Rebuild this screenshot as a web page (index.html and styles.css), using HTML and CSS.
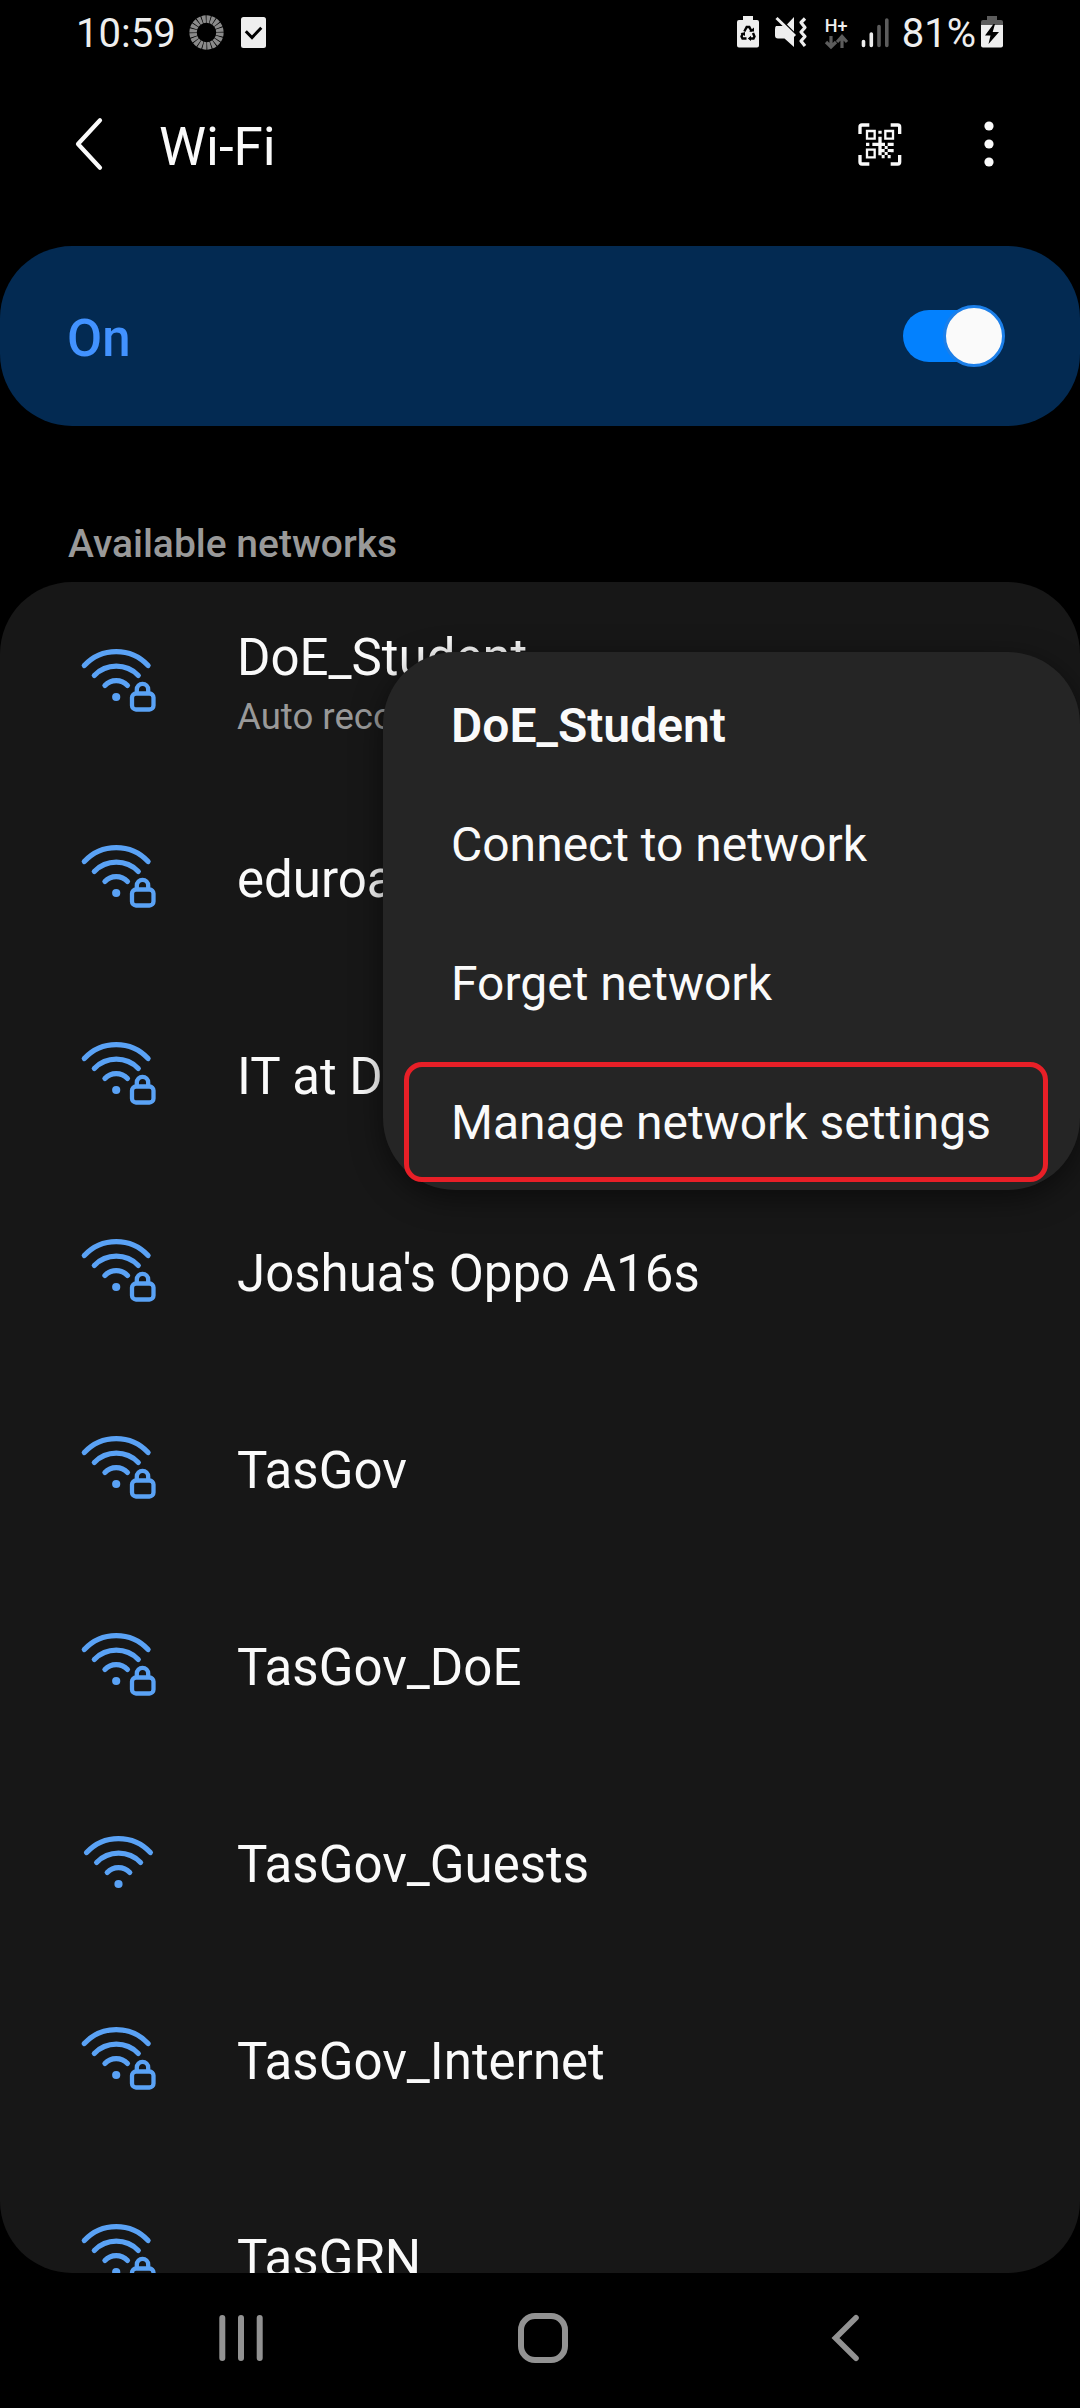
FILE: index.html
```html
<!DOCTYPE html>
<html lang="en">
<head>
<meta charset="utf-8">
<title>Wi-Fi</title>
<link rel="stylesheet" href="styles.css">
</head>
<body>
<svg class="defs" width="0" height="0" aria-hidden="true">
  <symbol id="waves" viewBox="20 36 80 68">
    <g fill="none" stroke="currentColor" stroke-width="5.200" stroke-linecap="round">
      <path d="M24.3 55.5a43.5 43.5 0 0 1 63.8 0"/>
      <path d="M34.3 65.5a30.7 30.7 0 0 1 44 0"/>
      <path d="M44.9 75.5a15.7 15.7 0 0 1 22.6 0"/>
    </g>
    <circle cx="56.2" cy="87" r="4.100" fill="currentColor"/>
  </symbol>
  <symbol id="wifi-lock" viewBox="20 36 80 68">
    <use href="#waves" x="20" y="36" width="80" height="68"/>
    <g fill="none" stroke="currentColor" stroke-width="4.300">
      <rect x="72" y="83.5" width="21.5" height="16" rx="4"/>
      <path d="M76.8 83v-3.500a5.700 5.700 0 0 1 11.400 0v3.500"/>
    </g>
  </symbol>
  <symbol id="wifi-open" viewBox="20 36 80 68">
    <use href="#waves" x="22.300" y="42" width="80" height="68"/>
  </symbol>
</svg>

<div class="phone">
  <header class="status">
    <span class="clock">10:59</span>
    <svg class="ring" width="35" height="35" viewBox="0 0 35 35"><circle cx="17.500" cy="17.500" r="13.400" fill="none" stroke="#8a8a8a" stroke-width="7.500" pathLength="200" stroke-dasharray="8.300 1.700"/></svg>
    <svg class="task" width="25" height="31" viewBox="0 0 25 31"><rect width="25" height="31" rx="2.500" fill="#eee"/><path d="M4.800 14.300l6.200 6.200 9.300-9.700" fill="none" stroke="#000" stroke-width="3"/></svg>
    <div class="status-right">
      <svg width="22" height="32" viewBox="0 0 22 32"><path fill="#eee" d="M6 0h10v4h4q2 0 2 2v23.500q0 2-2 2H2q-2 0-2-2V6q0-2 2-2h4z"/><g fill="none" stroke="#000" stroke-width="2.400"><path d="M7.300 15.500l2.400-4.500h2.600l2.400 4.500"/><path d="M16 17l1.500 3.500-1 2H12.500"/><path d="M9.500 22.500H5.500l-1-2L6 17"/></g><path d="M12 15.500h5v-4zM14 19.800v5.200l-3.200-2.600zM3.500 17.500l4.500-1.500v4z" fill="#000"/></svg>
      <svg class="mute" width="33" height="32" viewBox="0 0 33 32"><path d="M2 10h7.500L20 19.500V31l-9.500-8.500H4q-3 0-3-3v-6q0-3 1-3.500z" fill="#eee"/><path d="M20 1v14.500l-7-7z" fill="#eee"/><path d="M2.500 2L21 20" stroke="#eee" stroke-width="3"/><path d="M31 2.500l-4 4 4 5-4 4.500 4 4.500-4 4.500 4 5" fill="none" stroke="#eee" stroke-width="3.200" stroke-linejoin="round"/></svg>
      <svg class="data" width="23" height="32" viewBox="0 0 23 32"><text class="data-label" x="-.3" y="15.700">H+</text><g fill="none" stroke="#5c5c5c" stroke-width="3.200"><path d="M6 20v11M1 26l5 5 5-5M17 32V21M12 26l5-5.500 5 5.500"/></g></svg>
      <svg class="signal" width="28" height="31" viewBox="0 0 28 31" stroke-width="3.600" stroke-linecap="round"><path stroke="#eee" d="M2.500 24.500v4M10.300 17v11.500"/><path stroke="#5c5c5c" d="M18 9.500v19M25.800 3v25.500"/></svg>
      <span class="percent">81%</span>
      <svg class="battery" width="22" height="32" viewBox="0 0 22 32"><path fill="#5c5c5c" d="M6 0h10v4h4q2 0 2 2v4H0V6q0-2 2-2h4z"/><path fill="#eee" d="M0 9h22v20.500q0 2-2 2H2q-2 0-2-2z"/><path d="M12.500 8L4 19.500h5.500L7.500 28 18 16h-6.300L14 8z" fill="#000"/></svg>
    </div>
  </header>

  <div class="appbar">
    <svg width="30" height="54" viewBox="0 0 30 54"><path d="M26 3.300L4 27l22 23.700" fill="none" stroke="#fafafa" stroke-width="4.200" stroke-linecap="round" stroke-linejoin="round"/></svg>
    <h1>Wi-Fi</h1>
    <svg class="qr" width="44" height="43" viewBox="55 67 132 129">
      <path d="M61 100V79q0-6 6-6h22M153 73h21q6 0 6 6v21M180 163v21q0 6-6 6h-21M89 190H67q-6 0-6-6v-21" fill="none" stroke="#fafafa" stroke-width="10"/>
      <path d="M82 91h23v23H82zM137 91h23v23h-23zM82 147h23v23H82z" fill="none" stroke="#fafafa" stroke-width="7"/>
      <path d="M116 90h10v9h-10zM79 126h10v10H79zM98 126h18v-18h10v18h10v10h-10v9h9v10h-9v9h-10v-28H98zM144 126h18v10h-18zM135 136h9v9h-9zM153 145h9v10h-9zM144 145h9v9h-9zM126 163h9v10h-9zM135 154h9v9h-9zM144 163h9v10h-9z" fill="#fafafa"/>
    </svg>
    <svg class="more" width="10" height="46" viewBox="0 0 10 46" fill="#fafafa"><circle cx="5" cy="5" r="4.600"/><circle cx="5" cy="23" r="4.600"/><circle cx="5" cy="41" r="4.600"/></svg>
  </div>

  <section class="power">
    <span class="power-label">On</span>
    <span class="toggle"><span class="thumb"></span></span>
  </section>

  <h2>Available networks</h2>

  <main class="networks">
    <div class="row first"><svg class="wifi"><use href="#wifi-lock"/></svg><div class="names"><div class="ssid">DoE_Student</div><div class="note">Auto reconnect turned off</div></div></div>
    <div class="row"><svg class="wifi"><use href="#wifi-lock"/></svg><div class="ssid">eduroam</div></div>
    <div class="row"><svg class="wifi"><use href="#wifi-lock"/></svg><div class="ssid">IT at DoE</div></div>
    <div class="row"><svg class="wifi"><use href="#wifi-lock"/></svg><div class="ssid">Joshua's Oppo A16s</div></div>
    <div class="row"><svg class="wifi"><use href="#wifi-lock"/></svg><div class="ssid">TasGov</div></div>
    <div class="row"><svg class="wifi"><use href="#wifi-lock"/></svg><div class="ssid">TasGov_DoE</div></div>
    <div class="row"><svg class="wifi"><use href="#wifi-open"/></svg><div class="ssid">TasGov_Guests</div></div>
    <div class="row"><svg class="wifi"><use href="#wifi-lock"/></svg><div class="ssid">TasGov_Internet</div></div>
    <div class="row"><svg class="wifi"><use href="#wifi-lock"/></svg><div class="ssid">TasGRN</div></div>
  </main>

  <nav class="navbar">
    <svg width="46" height="48" viewBox="0 0 46 48" stroke="#929292" stroke-width="6" stroke-linecap="round"><path d="M4.300 4v40M23 4v40M41.700 4v40"/></svg>
    <svg width="50" height="50" viewBox="0 0 50 50"><rect x="3" y="3" width="44" height="44" rx="14" fill="none" stroke="#929292" stroke-width="6"/></svg>
    <svg width="28" height="48" viewBox="0 0 28 48"><path d="M25 3.700L4.500 24 25 44.300" fill="none" stroke="#929292" stroke-width="5.600" stroke-linecap="round"/></svg>
  </nav>

  <div class="menu">
    <div class="menu-title">DoE_Student</div>
    <div class="menu-item">Connect to network</div>
    <div class="menu-item">Forget network</div>
    <div class="menu-item">Manage network settings</div>
    <div class="highlight"></div>
  </div>
</div>
</body>
</html>
```
FILE: styles.css
```css
* { box-sizing: border-box; }
body { margin: 0; background: #000; color: #fafafa; font-family: Roboto, sans-serif; }
svg { display: block; flex: none; overflow: visible; }
.defs { position: absolute; }
.phone { position: relative; width: 1080px; height: 2408px; overflow: hidden; display: flex; flex-direction: column; background: #000; }

.status { flex: none; height: 64px; padding: 0 77px 0 76px; display: flex; align-items: center; color: #eee; font-size: 40px; line-height: 64px; }
.clock, .percent { padding-top: 4px; }
.ring { margin-left: 13px; }
.task { margin-left: 17px; }
.status-right { margin-left: auto; display: flex; align-items: center; }
.mute { margin-left: 15px; }
.data { margin-left: 18px; }
.data-label { font: 500 18px Roboto, sans-serif; fill: #eee; }
.signal { margin-left: 13px; }
.percent { margin-left: 13px; }
.battery { margin-left: 5px; }

.appbar { flex: none; height: 160px; display: flex; align-items: center; padding: 0 86px 0 74px; }
h1 { margin: 0 auto 0 55px; padding-top: 6px; font-size: 53px; font-weight: 400; line-height: 60px; }
.more { margin-left: 82px; }

.power { flex: none; height: 180px; margin-top: 22px; padding: 0 75px 0 67px; border-radius: 72px; background: #032a52; display: flex; align-items: center; justify-content: space-between; }
.power-label { padding-top: 6px; font-size: 51px; font-weight: 500; line-height: 60px; color: #4292ff; }
.toggle { position: relative; width: 100px; height: 52px; margin-right: 2px; border-radius: 26px; background: #0381fe; }
.thumb { position: absolute; right: -2px; top: -5px; width: 62px; height: 62px; border: 3px solid #1c7fe9; border-radius: 50%; background: #fafafa; }

h2 { flex: none; margin: 0; padding: 99px 0 19px 68px; font-size: 39px; font-weight: 500; line-height: 38px; color: #999; }

.networks { flex: none; height: 1691px; overflow: hidden; border-radius: 72px; background: #171717; }
.row { height: 197px; padding-left: 80px; display: flex; gap: 77px; font-size: 51px; line-height: 197px; white-space: nowrap; }
.wifi { width: 80px; height: 68px; margin-top: 61px; color: #5aa2f5; }
.first { height: 199px; line-height: 60px; }
.first .wifi { margin-top: 64px; }
.names { padding-top: 46px; }
.note { margin-top: 7px; font-size: 36.600px; line-height: 44px; color: #999; }

.navbar { flex: none; height: 130px; padding: 0 84px 0 90px; display: grid; grid-template-columns: repeat(3, 302px); align-items: center; justify-items: center; }

.menu { position: absolute; left: 383px; top: 652px; width: 697px; height: 538px; padding: 46px 0 0 68px; border-radius: 72px; background: #252525; box-shadow: 0 8px 30px rgba(0, 0, 0, .5); font-size: 48px; }
.menu-title { margin-bottom: 21px; font-weight: 600; line-height: 56px; }
.menu-item { height: 139px; line-height: 139px; }
.highlight { position: absolute; left: 21px; top: 410px; width: 644px; height: 120px; border: 5px solid #e81f27; border-radius: 18px; }
```
